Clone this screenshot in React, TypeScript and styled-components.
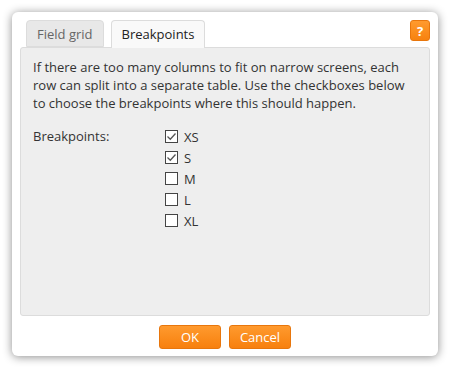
import React, { useState } from 'react';
import styled, { createGlobalStyle } from 'styled-components';

const GlobalStyle = createGlobalStyle`
    html, body {
        margin: 0;
        padding: 0;
        background: #ffffff;
    }
    body {
        font-family: "Open Sans", "Liberation Sans", sans-serif;
        font-size: 13px;
        color: #333;
    }
`;

const breakpoints = ['XS', 'S', 'M', 'L', 'XL'];

const App: React.FC = () => {
    const [tab, setTab] = useState(1);
    const [checked, setChecked] = useState<Record<string, boolean>>({ XS: true, S: true });

    const toggle = (bp: string) => setChecked({ ...checked, [bp]: !checked[bp] });

    return (
        <Page>
            <GlobalStyle />
            <Dialog>
                <TabBar>
                    <Tab active={tab === 0} onClick={() => setTab(0)}>Field grid</Tab>
                    <Tab active={tab === 1} onClick={() => setTab(1)}>Breakpoints</Tab>
                    <HelpButton>?</HelpButton>
                </TabBar>
                <Panel>
                    <Intro>
                        If there are too many columns to fit on narrow screens, each row can split into a
                        separate table. Use the checkboxes below to choose the breakpoints where this should
                        happen.
                    </Intro>
                    <FieldRow>
                        <FieldLabel>Breakpoints:</FieldLabel>
                        <CheckList>
                            {breakpoints.map((bp) => (
                                <CheckItem key={bp} onClick={() => toggle(bp)}>
                                    <Box>
                                        {checked[bp] && (
                                            <svg width="11" height="11" viewBox="0 0 11 11">
                                                <path d="M1.5 5.5 L4.3 8.2 L9.5 2.5" fill="none" stroke="#555" strokeWidth="1.3" />
                                            </svg>
                                        )}
                                    </Box>
                                    {bp}
                                </CheckItem>
                            ))}
                        </CheckList>
                    </FieldRow>
                </Panel>
                <Footer>
                    <Button>OK</Button>
                    <Button>Cancel</Button>
                </Footer>
            </Dialog>
        </Page>
    );
};

// Styled Components
const Page = styled.div`
    width: 450px;
    height: 369px;
    padding: 12px;
    box-sizing: border-box;
`;

const Dialog = styled.div`
    width: 426px;
    height: 344px;
    background: #fff;
    border-radius: 6px;
    box-shadow: 0 1px 10px rgba(0, 0, 0, 0.45);
    padding: 8px 8px 0 8px;
    box-sizing: border-box;
    display: flex;
    flex-direction: column;
`;

const TabBar = styled.div`
    display: flex;
    align-items: flex-end;
    gap: 7px;
    padding-left: 6px;
    height: 27px;
    position: relative;
    z-index: 1;
`;

const Tab = styled.div<{ active: boolean }>`
    height: ${(p) => (p.active ? '28px' : '27px')};
    margin-bottom: ${(p) => (p.active ? '-1px' : '0')};
    padding: 0 10px;
    display: flex;
    align-items: center;
    box-sizing: border-box;
    border: 1px solid #dcdcdc;
    border-bottom: ${(p) => (p.active ? 'none' : '1px solid #dcdcdc')};
    border-radius: 4px 4px 0 0;
    background: ${(p) => (p.active ? '#f9f9f9' : '#e8e8e8')};
    color: ${(p) => (p.active ? '#222' : '#666')};
    cursor: pointer;
    padding-bottom: ${(p) => (p.active ? '1px' : '0')};
`;

const HelpButton = styled.button`
    margin-left: auto;
    align-self: flex-start;
    width: 20px;
    height: 21px;
    padding: 0;
    border: 1px solid #e8760c;
    border-radius: 3px;
    background: linear-gradient(#ff9a2e, #f7820f);
    color: #fff;
    font-family: "Open Sans", sans-serif;
    font-weight: bold;
    font-size: 13px;
    line-height: 18px;
`;

const Panel = styled.div`
    height: 269px;
    box-sizing: border-box;
    background: #eeeeee;
    border: 1px solid #dcdcdc;
    border-radius: 3px;
    padding: 10px 12px;
`;

const Intro = styled.p`
    margin: 0 0 14px 0;
    line-height: 18px;
    color: #333;
`;

const FieldRow = styled.div`
    display: flex;
`;

const FieldLabel = styled.div`
    width: 132px;
    line-height: 21px;
`;

const CheckList = styled.div`
    display: flex;
    flex-direction: column;
`;

const CheckItem = styled.label`
    display: flex;
    align-items: center;
    gap: 6px;
    height: 21px;
    cursor: pointer;
`;

const Box = styled.span`
    width: 13px;
    height: 13px;
    box-sizing: border-box;
    border: 1px solid #444;
    background: #fff;
    display: flex;
    align-items: center;
    justify-content: center;
`;

const Footer = styled.div`
    display: flex;
    justify-content: center;
    gap: 8px;
    padding-top: 9px;
`;

const Button = styled.button`
    width: 62px;
    height: 24px;
    padding: 0;
    border: 1px solid #e8760c;
    border-radius: 3px;
    background: linear-gradient(#ff9a2e, #f7800e);
    color: #fff;
    font-family: "Open Sans", sans-serif;
    font-size: 13px;
    cursor: pointer;
`;

export default App;
